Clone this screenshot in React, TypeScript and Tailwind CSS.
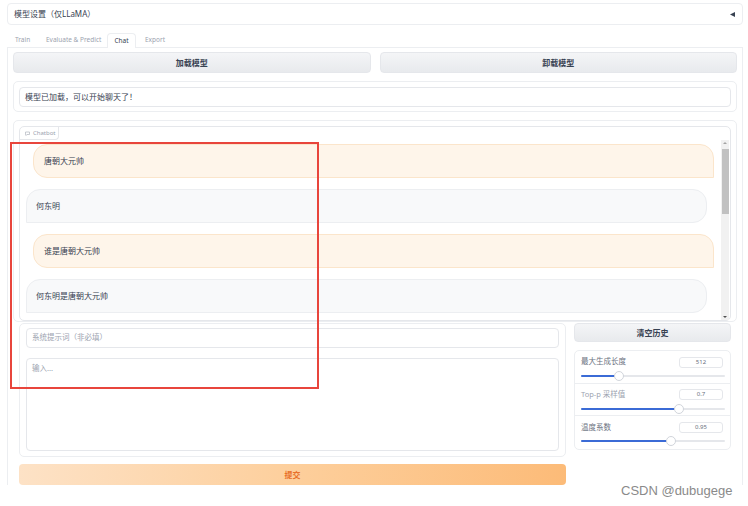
import React from "react";

// ─── Types ────────────────────────────────────────────────────────────────────

interface Msg {
  role: "user" | "bot";
  text: string;
}

interface SliderDef {
  label: string;
  value: string;
  pct: number;
  muted?: boolean;
}

const messages: Msg[] = [
  { role: "user", text: "唐朝大元帅" },
  { role: "bot", text: "何东明" },
  { role: "user", text: "谁是唐朝大元帅" },
  { role: "bot", text: "何东明是唐朝大元帅" },
];

const sliders: SliderDef[] = [
  { label: "最大生成长度", value: "512", pct: 26.4 },
  { label: "Top-p 采样值", value: "0.7", pct: 68, muted: true },
  { label: "温度系数", value: "0.95", pct: 62.5 },
];

// ─── Small pieces ─────────────────────────────────────────────────────────────

function GrayButton({ label, className = "" }: { label: string; className?: string }) {
  return (
    <button
      className={`flex items-center justify-center rounded-[4px] border border-[#e5e7eb] bg-gradient-to-b from-[#f4f5f7] to-[#e8eaed] text-[8px] font-semibold text-[#374151] ${className}`}
    >
      {label}
    </button>
  );
}

function Bubble({ msg }: { msg: Msg }) {
  if (msg.role === "user") {
    return (
      <div className="ml-[13px] mr-[7px] flex h-[34px] items-center rounded-l-[14px] rounded-tr-[14px] border border-[#fbe5cb] bg-[#fef5ea] pl-[10px] text-[8px] text-[#374151]">
        {msg.text}
      </div>
    );
  }
  return (
    <div className="ml-[6px] mr-[14px] flex h-[34px] items-center rounded-r-[14px] rounded-tl-[14px] border border-[#eceef1] bg-[#f8f9fa] pl-[9px] text-[8px] text-[#374151]">
      {msg.text}
    </div>
  );
}

function SliderRow({ def, last }: { def: SliderDef; last?: boolean }) {
  return (
    <div className={`flex h-[33px] flex-col px-[6px] pt-[5px] ${last ? "" : "border-b border-[#eceef1]"}`}>
      <div className="flex h-[12px] items-center justify-between pr-[1px]">
        <span className={`text-[7.5px] ${def.muted ? "text-[#9ca3af]" : "text-[#6b7280]"}`}>{def.label}</span>
        <span className="flex h-[11px] w-[44px] items-center justify-center rounded-[3px] border border-[#e5e7eb] text-[6px] text-[#6b7280]">
          {def.value}
        </span>
      </div>
      <div className="relative mt-[7px] h-[2px] w-[144px] rounded-full bg-[#e5e7eb]">
        <div className="h-full rounded-full bg-[#3b6bd6]" style={{ width: `${def.pct}%` }} />
        <div
          className="absolute top-[-4px] h-[10px] w-[10px] -translate-x-1/2 rounded-full border border-[#d1d5db] bg-white"
          style={{ left: `${def.pct}%` }}
        />
      </div>
    </div>
  );
}

// ─── App ──────────────────────────────────────────────────────────────────────

export default function App() {
  return (
    <div className="relative h-[506px] w-[748px] overflow-hidden bg-white font-['Noto_Sans','Noto_Sans_CJK_SC',sans-serif] text-[#374151]">
      <div className="flex h-[485px] flex-col overflow-hidden pl-[7px] pr-[5px] pt-[3px]">
        {/* Header accordion */}
        <div className="flex h-[22px] shrink-0 items-center justify-between rounded-[4px] border border-[#eceef1] pl-[6px] pr-[6px] text-[8px]">
          <span>模型设置（仅LLaMA）</span>
          <svg width="5" height="5" viewBox="0 0 5 5" className="mr-[1px]">
            <path d="M0 2.5 L5 0 L5 5 Z" fill="#374151" />
          </svg>
        </div>

        {/* Tabs */}
        <div className="mt-[7px] flex h-[15px] shrink-0 items-end text-[6.5px] text-[#9ca3af]">
          <div className="ml-[8px] flex h-[14px] w-[31px] items-center">Train</div>
          <div className="flex h-[14px] w-[61px] items-center">Evaluate &amp; Predict</div>
          <div className="relative z-10 mb-[-1px] flex h-[15px] w-[29px] items-center justify-center rounded-t-[4px] border border-b-0 border-[#eceef1] bg-white text-[#374151]">
            Chat
          </div>
          <div className="ml-[9px] flex h-[14px] items-center">Export</div>
        </div>

        {/* Tab panel */}
        <div className="flex flex-1 flex-col border-l border-r border-t border-[#eceef1] px-[5px] pt-[4px]">
          <div className="flex h-[21px] shrink-0 gap-[9px]">
            <GrayButton label="加载模型" className="flex-1" />
            <GrayButton label="卸载模型" className="flex-1" />
          </div>

          <div className="mt-[8px] h-[31px] shrink-0 rounded-[5px] border border-[#eceef1] px-[5px] pt-[5px]">
            <div className="flex h-[20px] items-center rounded-[4px] border border-[#e5e7eb] pl-[5px] text-[8px]">
              模型已加载，可以开始聊天了！
            </div>
          </div>

          {/* Chatbot */}
          <div className="mt-[8px] h-[202px] shrink-0 rounded-[5px] border border-[#eceef1] px-[5px] pt-[5px]">
            <div className="relative flex h-[195px] flex-col rounded-[5px] border border-[#e5e7eb]">
              <div className="flex h-[13px] w-[39px] items-center gap-[3px] rounded-br-[4px] border-b border-r border-[#e5e7eb] pl-[5px] text-[6px] text-[#9ca3af]">
                <svg width="5" height="5" viewBox="0 0 10 10" fill="none" stroke="#b0b5bd" strokeWidth="1.4">
                  <path d="M1 2 h8 v5 h-5 l-2 2 v-2 h-1 z" />
                </svg>
                Chatbot
              </div>
              <div className="flex flex-1 overflow-hidden">
                <div className="flex flex-1 flex-col gap-[11px] pt-[4px]">
                  {messages.map((m, i) => (
                    <Bubble key={i} msg={m} />
                  ))}
                </div>
                {/* Scrollbar */}
                <div className="mr-[1px] flex w-[8px] flex-col items-center bg-[#f1f1f1]">
                  <svg width="4" height="6" viewBox="0 0 4 6">
                    <path d="M0 4 L2 2 L4 4 Z" fill="#a3a3a3" />
                  </svg>
                  <div className="mt-[3px] h-[65px] w-[7px] bg-[#c1c1c1]" />
                  <div className="flex-1" />
                  <svg width="4" height="6" viewBox="0 0 4 6">
                    <path d="M0 2 L2 4 L4 2 Z" fill="#505050" />
                  </svg>
                </div>
              </div>
            </div>
          </div>

          {/* Input + params */}
          <div className="mt-[1px] flex gap-[8px] px-[6px]">
            <div className="flex w-[547px] flex-col">
              <div className="flex h-[134px] flex-col rounded-[5px] border border-[#eceef1] px-[6px] pt-[4px]">
                <div className="flex h-[20px] items-center rounded-[4px] border border-[#e5e7eb] pl-[5px] text-[7.5px] text-[#9ca3af]">
                  系统提示词（非必填）
                </div>
                <div className="mt-[10px] h-[93px] rounded-[4px] border border-[#e5e7eb] pl-[5px] pt-[4px] text-[7.5px] text-[#9ca3af]">
                  输入...
                </div>
              </div>
              <button className="mt-[7px] flex h-[21px] items-center justify-center rounded-[4px] bg-gradient-to-r from-[#fde2c6] via-[#fdcf9c] to-[#fcbb78] text-[8px] font-semibold text-[#e8712a]">
                提交
              </button>
            </div>

            <div className="flex w-[157px] flex-col">
              <GrayButton label="清空历史" className="h-[19px]" />
              <div className="mt-[8px] flex h-[100px] flex-col rounded-[5px] border border-[#eceef1]">
                {sliders.map((s, i) => (
                  <SliderRow key={s.label} def={s} last={i === sliders.length - 1} />
                ))}
              </div>
            </div>
          </div>
        </div>
      </div>

      {/* Red annotation box */}
      <div className="absolute left-[10px] top-[142px] h-[247px] w-[309px] border-2 border-[#e8453c]" />

      {/* Watermark */}
      <div className="absolute left-[621px] top-[481px] font-['Liberation_Sans',sans-serif] text-[13px] text-[#8a8a8a]">
        CSDN @dubugege
      </div>
    </div>
  );
}
